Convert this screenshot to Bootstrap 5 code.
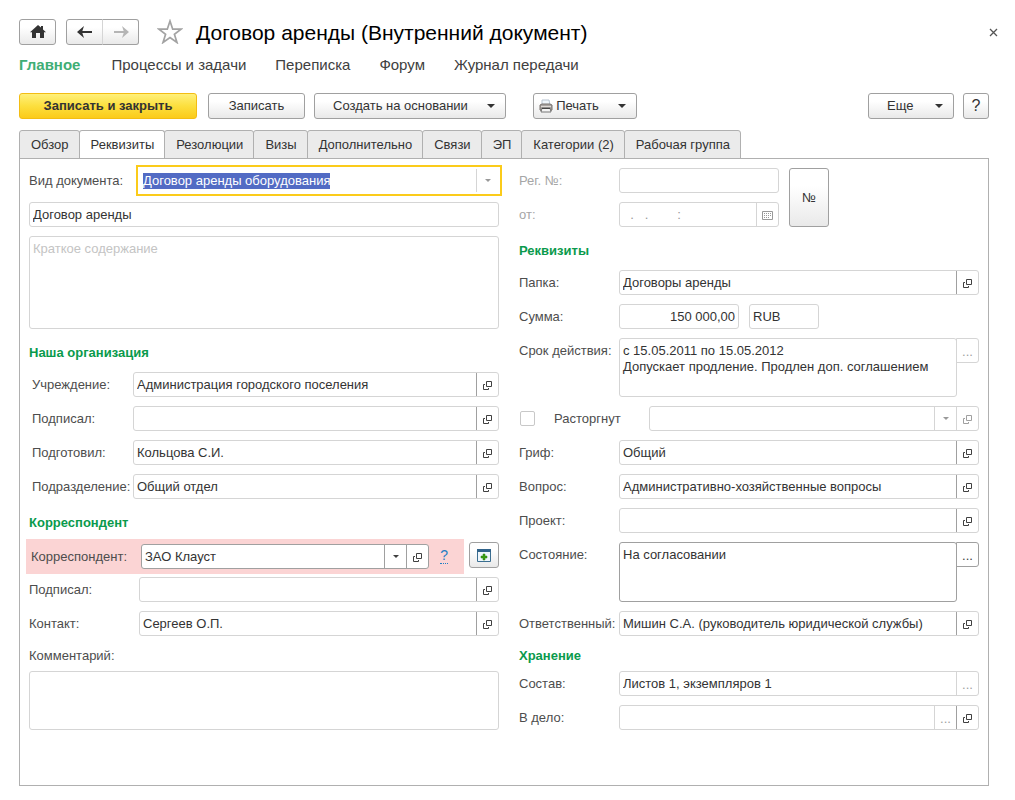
<!DOCTYPE html>
<html lang="ru">
<head>
<meta charset="utf-8">
<meta name="viewport" content="width=device-width, initial-scale=1">
<title>Договор аренды (Внутренний документ)</title>
<link href="https://cdn.jsdelivr.net/npm/bootstrap@5.3.0/dist/css/bootstrap.min.css" rel="stylesheet">
<style>
  :root { --line: #d5d5d5; --edge: #a0a0a0; --ink: #333; }
  body { font-family: "Liberation Sans", Arial, sans-serif; font-size: 13px; line-height: 16px; color: var(--ink); background: #fff; }
  .page { padding: 19px 26px 14px 19px; }
  svg { display: block; flex: none; }

  /* window header */
  .topbar { height: 26px; margin-right: -10px; }
  .history { margin: 0 18px 0 10px; }
  .doc-title { font-size: 21px; line-height: 26px; color: #000; margin: 1px 0 0 13px; }
  .close-btn { border: 0; background: none; padding: 0 1px; }
  .sections { height: 40px; padding-top: 8px; font-size: 15px; line-height: 24px; gap: 29px; }
  .sections a { color: #404040; text-decoration: none; }
  .sections a.current { color: #3fae75; font-weight: bold; margin-right: 2px; }

  /* push buttons */
  .btn-form { --bs-btn-padding-x: 0; --bs-btn-padding-y: 0; --bs-btn-font-size: 13px; --bs-btn-line-height: 16px;
    --bs-btn-border-radius: 3px; --bs-btn-color: #333; --bs-btn-border-color: #a0a0a0; --bs-btn-hover-border-color: #888;
    display: inline-flex; align-items: center; justify-content: center; height: 26px;
    background: linear-gradient(#fff 30%, #e9e9e9); }
  .btn-main { --bs-btn-border-color: #f3bd13; font-weight: bold; background: linear-gradient(#fff07a, #fcdf3e 50%, #fbcb1a); margin-right: 2px; }
  .btn-drop { justify-content: space-between; padding: 0 10px 0 18px; }
  .btn-fwd { border-left-color: #d5d5d5; }
  .w-main { width: 178px; } .w-save { width: 97px; } .w-create { width: 192px; }
  .w-print { width: 104px; padding-left: 5px; margin-left: 18px; }
  .w-more { width: 86px; } .w-sq { width: 26px; } .w-home { width: 37px; } .w-add { width: 30px; margin-top: 3px; }
  .toolbar { gap: 9px; padding-top: 8px; }
  .caret { width: 0; height: 0; border: 4px solid transparent; border-top: 4px solid #333; border-bottom: 0; }
  .caret-sm { width: 0; height: 0; border: 3px solid transparent; border-top: 3px solid #404040; border-bottom: 0; }

  /* tabs */
  .form-tabs { margin: 11px 0 -1px; border: 0; --bs-nav-tabs-border-radius: 3px; }
  .form-tabs .nav-link { height: 29px; padding: 0 10px 0 11px; margin: 0 -1px 0 0; color: #333; background: #ebebeb;
    border: 1px solid #b0b0b0; line-height: 27px; font-size: 13px; }
  .form-tabs .nav-link.active { background: #fff; color: #333; border-color: #b0b0b0 #b0b0b0 #fff; }
  .sheet { border: 1px solid #b0b0b0; padding: 9px; gap: 20px; }
  .col-left { flex: 470 1 0; min-width: 0; }
  .col-right { flex: 460 1 0; min-width: 0; }
  .stack { display: flex; flex-direction: column; gap: 9px; }

  /* form lines */
  .line { display: flex; min-height: 25px; }
  .numbering { display: flex; gap: 10px; }
  .cap { flex: none; width: 100px; line-height: 25px; color: #4d4d4d; white-space: nowrap; }
  .cap-org { width: 104px; padding-left: 3px; }
  .cap-kind, .cap-corr { width: 110px; }
  .cap-off { color: #a6a6a6; }
  .group-head { font-size: 13px; font-weight: bold; color: #0a9a4c; line-height: 29px; height: 25px; margin: 0; }
  .short { height: 17px; line-height: 21px; width: auto; }
  .box { display: flex; flex: 1 1 0; min-width: 0; height: 25px; border: 1px solid var(--line); border-radius: 3px; background: #fff; }
  .box input { flex: 1 1 0; width: 0; min-width: 0; border: 0; padding: 0 3px; background: none; color: var(--ink); outline: 0; }
  .box input.faint { color: #999; }
  .box button, .side { flex: none; width: 22px; padding: 0; border: 0; border-left: 1px solid var(--edge); background: none;
    display: flex; align-items: center; justify-content: center; color: #404040; }
  .box button svg { margin-top: 1px; }
  .box button.off, .side.off { border-left-color: var(--line); color: #a0a0a0; }
  .off .caret-sm { border-top-color: #999; }
  .strong { border-color: var(--edge); }
  .focused { border-color: transparent; outline: 2px solid #fbcb1a; outline-offset: 1px; border-radius: 0; }
  ::selection { background: #526bc4; color: #fff; }
  .memo { display: block; flex: 1 1 0; min-width: 0; border: 1px solid var(--line); border-radius: 3px; padding: 4px 3px;
    resize: none; color: var(--ink); line-height: 16px; outline: 0; overflow: hidden; background: none; }
  .memo::placeholder { color: #c4c4c4; opacity: 1; }
  .memo.strong { border-color: var(--edge); }
  .h-tall { height: 93px; flex: none; } .h-two { height: 59px; flex: none; } .h-state { height: 60px; }
  .line .h-two { flex: 1 1 0; }
  .side { width: 23px; height: 25px; margin-left: -1px; border: 1px solid var(--line); border-radius: 0 3px 3px 0; }
  .side.strong { border-color: var(--edge); }
  .dots { line-height: 16px; padding-top: 3px; }
  .w-sum { flex: none; width: 120px; } .w-cur { flex: none; width: 70px; margin-left: 10px; } .w-reg { flex: none; width: 160px; }
  .w-num { width: 40px; height: 59px; }
  .tick { appearance: none; width: 15px; height: 15px; border: 1px solid #c8c8c8; border-radius: 2px; margin: 5px 19px 0 1px; flex: none; background: #fff; }
  .tick-label { width: 95px; }
  .missing { margin: -3px 0 -6px -3px; gap: 5px; }
  .missing-bg { display: flex; flex: 1 1 0; min-width: 0; background: #fbd4d4; padding: 5px 16px 5px 5px; }
  .hint { font-size: 14px; line-height: 16px; color: #1f7fc4; text-decoration: none; border-bottom: 1px dotted #1f7fc4; margin: 3px 0 0 11px; height: 17px; }
</style>
</head>
<body>
<svg width="0" height="0" class="position-absolute" aria-hidden="true">
  <symbol id="open" viewBox="0 0 9 9"><path d="M3.500.5h5v5h-5zM2 3.500H.5v5h5V7" fill="none" stroke="currentColor"/></symbol>
</svg>

<div class="page d-flex flex-column min-vh-100">
  <header>
    <div class="topbar d-flex align-items-start">
      <button class="btn btn-form w-home" aria-label="Домой">
        <svg width="16" height="14" viewBox="0 0 16 14"><path d="M8 0 0 7.200h2V13h4V8h4v5h4V7.200h2L13 4.400V1h-2v1.600z" fill="#333"/></svg>
      </button>
      <div class="btn-group history">
        <button class="btn btn-form w-home" aria-label="Назад">
          <svg width="16" height="12" viewBox="0 0 16 12"><path d="M2 6h13" stroke="#333" stroke-width="2"/><path d="M7 0 0 6l7 6L5 6z" fill="#333"/></svg>
        </button>
        <button class="btn btn-form btn-fwd w-home" aria-label="Вперёд">
          <svg width="16" height="12" viewBox="0 0 16 12"><path d="M1 6h13" stroke="#b5b5b5" stroke-width="2"/><path d="M9 0l7 6-7 6 2-6z" fill="#b5b5b5"/></svg>
        </button>
      </div>
      <svg width="26" height="25" viewBox="0 0 26 25"><path d="M13 2l2.700 8.200h8.300l-6.600 5.100 2.600 8.200-7-5-7 5 2.600-8.200L2 10.200h8.300z" fill="#fff" stroke="#a3a3a3" stroke-width="1.700"/></svg>
      <h1 class="doc-title">Договор аренды (Внутренний документ)</h1>
      <button class="close-btn ms-auto align-self-center" aria-label="Закрыть">
        <svg width="9" height="9" viewBox="0 0 9 9"><path d="M1 1l7 7M8 1 1 8" stroke="#555" stroke-width="1.300"/></svg>
      </button>
    </div>
    <nav class="sections d-flex">
      <a class="current" href="#">Главное</a>
      <a href="#">Процессы и задачи</a>
      <a href="#">Переписка</a>
      <a href="#">Форум</a>
      <a href="#">Журнал передачи</a>
    </nav>
    <div class="toolbar d-flex">
      <button class="btn btn-form btn-main w-main">Записать и закрыть</button>
      <button class="btn btn-form w-save">Записать</button>
      <button class="btn btn-form btn-drop w-create">Создать на основании<span class="caret"></span></button>
      <button class="btn btn-form btn-drop w-print">
        <svg width="14" height="14" viewBox="0 0 14 14"><path d="M3 1h7l1 5H3z" fill="#eef5fb" stroke="#b7c3d0"/><path d="M1 6l2-1h8l2 1v5l-2 1H3l-2-1z" fill="#a8a4a2" stroke="#77706c"/><path d="M2 7.500h10" stroke="#ded9d5"/><path d="M3 9h8l1 4H2z" fill="#f4f4f4" stroke="#777"/><path d="M3 9.500h8" stroke="#444"/></svg>
        <span class="me-3">Печать</span><span class="caret"></span>
      </button>
      <button class="btn btn-form btn-drop w-more ms-auto">Еще<span class="caret"></span></button>
      <button class="btn btn-form w-sq fs-6">?</button>
    </div>
  </header>

  <ul class="nav nav-tabs form-tabs" role="tablist">
    <li class="nav-item"><button class="nav-link" role="tab">Обзор</button></li>
    <li class="nav-item"><button class="nav-link active" role="tab">Реквизиты</button></li>
    <li class="nav-item"><button class="nav-link" role="tab">Резолюции</button></li>
    <li class="nav-item"><button class="nav-link" role="tab">Визы</button></li>
    <li class="nav-item"><button class="nav-link" role="tab">Дополнительно</button></li>
    <li class="nav-item"><button class="nav-link" role="tab">Связи</button></li>
    <li class="nav-item"><button class="nav-link" role="tab">ЭП</button></li>
    <li class="nav-item"><button class="nav-link" role="tab">Категории (2)</button></li>
    <li class="nav-item"><button class="nav-link" role="tab">Рабочая группа</button></li>
  </ul>

  <main class="sheet d-flex flex-grow-1">
    <section class="col-left stack">
      <div class="line"><label class="cap cap-kind" for="kind">Вид документа:</label>
        <div class="box focused"><input id="kind" value="Договор аренды оборудования"><button class="off" aria-label="Выбрать"><span class="caret-sm"></span></button></div></div>
      <div class="line"><div class="box"><input aria-label="Наименование" value="Договор аренды"></div></div>
      <textarea class="memo h-tall" placeholder="Краткое содержание" aria-label="Краткое содержание"></textarea>

      <h2 class="group-head">Наша организация</h2>
      <div class="line"><label class="cap cap-org" for="org">Учреждение:</label>
        <div class="box"><input id="org" value="Администрация городского поселения"><button aria-label="Открыть"><svg width="9" height="9"><use href="#open"/></svg></button></div></div>
      <div class="line"><label class="cap cap-org" for="signed">Подписал:</label>
        <div class="box"><input id="signed"><button aria-label="Открыть"><svg width="9" height="9"><use href="#open"/></svg></button></div></div>
      <div class="line"><label class="cap cap-org" for="author">Подготовил:</label>
        <div class="box"><input id="author" value="Кольцова С.И."><button aria-label="Открыть"><svg width="9" height="9"><use href="#open"/></svg></button></div></div>
      <div class="line"><label class="cap cap-org" for="dept">Подразделение:</label>
        <div class="box"><input id="dept" value="Общий отдел"><button aria-label="Открыть"><svg width="9" height="9"><use href="#open"/></svg></button></div></div>

      <h2 class="group-head">Корреспондент</h2>
      <div class="line missing">
        <div class="missing-bg"><label class="cap cap-corr" for="corr">Корреспондент:</label>
          <div class="box strong"><input id="corr" value="ЗАО Клауст"><button aria-label="Выбрать"><span class="caret-sm"></span></button><button aria-label="Открыть"><svg width="9" height="9"><use href="#open"/></svg></button></div>
          <a class="hint" href="#">?</a></div>
        <button class="btn btn-form w-add" aria-label="Добавить">
          <svg width="14" height="13" viewBox="0 0 14 13"><path d="M.5.5h13v12H.5z" fill="#eef6fc" stroke="#3b6e91"/><path d="M0 0h14v3H0z" fill="#31638a"/><path d="M6 5h2v2h2v2H8v2H6V9H4V7h2z" fill="#3a9b12" stroke="#2f8a10" stroke-width=".5"/></svg>
        </button>
      </div>
      <div class="line"><label class="cap cap-corr" for="csigned">Подписал:</label>
        <div class="box"><input id="csigned"><button aria-label="Открыть"><svg width="9" height="9"><use href="#open"/></svg></button></div></div>
      <div class="line"><label class="cap cap-corr" for="contact">Контакт:</label>
        <div class="box"><input id="contact" value="Сергеев О.П."><button aria-label="Открыть"><svg width="9" height="9"><use href="#open"/></svg></button></div></div>
      <label class="cap short" for="comment">Комментарий:</label>
      <textarea class="memo h-two" id="comment"></textarea>
    </section>

    <section class="col-right stack">
      <div class="numbering">
        <div class="stack">
          <div class="line"><label class="cap cap-off" for="reg">Рег. №:</label><div class="box w-reg"><input id="reg"></div></div>
          <div class="line"><label class="cap cap-off" for="regdate">от:</label><div class="box w-reg"><input id="regdate" class="faint" value="  .   .        :"><button class="off" aria-label="Календарь"><svg width="11" height="9" viewBox="0 0 11 9"><path d="M.5.5h10v8H.5z" fill="none" stroke="#999"/><path d="M2 2.500h7M2 4.500h7M2 6.500h5" stroke="#999" stroke-dasharray="1 1"/></svg></button></div></div>
        </div>
        <button class="btn btn-form w-num">№</button>
      </div>

      <h2 class="group-head">Реквизиты</h2>
      <div class="line"><label class="cap" for="folder">Папка:</label>
        <div class="box"><input id="folder" value="Договоры аренды"><button aria-label="Открыть"><svg width="9" height="9"><use href="#open"/></svg></button></div></div>
      <div class="line"><label class="cap" for="sum">Сумма:</label>
        <div class="box w-sum"><input id="sum" class="text-end" value="150 000,00"></div>
        <div class="box w-cur"><input aria-label="Валюта" value="RUB"></div></div>
      <div class="line"><label class="cap" for="term">Срок действия:</label>
        <textarea class="memo h-two" id="term">с 15.05.2011 по 15.05.2012
Допускает продление. Продлен доп. соглашением</textarea><button class="side off" aria-label="Выбрать"><span class="dots">...</span></button></div>
      <div class="line"><input class="tick" type="checkbox" id="ended"><label class="cap tick-label" for="ended">Расторгнут</label>
        <div class="box"><input aria-label="Основание"><button class="off" aria-label="Выбрать"><span class="caret-sm"></span></button><button class="off" aria-label="Открыть"><svg width="9" height="9"><use href="#open"/></svg></button></div></div>
      <div class="line"><label class="cap" for="access">Гриф:</label>
        <div class="box"><input id="access" value="Общий"><button aria-label="Открыть"><svg width="9" height="9"><use href="#open"/></svg></button></div></div>
      <div class="line"><label class="cap" for="topic">Вопрос:</label>
        <div class="box"><input id="topic" value="Административно-хозяйственные вопросы"><button aria-label="Открыть"><svg width="9" height="9"><use href="#open"/></svg></button></div></div>
      <div class="line"><label class="cap" for="project">Проект:</label>
        <div class="box"><input id="project"><button aria-label="Открыть"><svg width="9" height="9"><use href="#open"/></svg></button></div></div>
      <div class="line"><label class="cap" for="state">Состояние:</label>
        <textarea class="memo strong h-state" id="state">На согласовании</textarea><button class="side strong" aria-label="Выбрать"><span class="dots">...</span></button></div>
      <div class="line"><label class="cap" for="owner">Ответственный:</label>
        <div class="box"><input id="owner" value="Мишин С.А. (руководитель юридической службы)"><button aria-label="Открыть"><svg width="9" height="9"><use href="#open"/></svg></button></div></div>
      <h2 class="group-head short">Хранение</h2>
      <div class="line"><label class="cap" for="parts">Состав:</label>
        <div class="box"><input id="parts" value="Листов 1, экземпляров 1"><button class="off" aria-label="Выбрать"><span class="dots">...</span></button></div></div>
      <div class="line"><label class="cap" for="file">В дело:</label>
        <div class="box"><input id="file"><button class="off" aria-label="Выбрать"><span class="dots">...</span></button><button aria-label="Открыть"><svg width="9" height="9"><use href="#open"/></svg></button></div></div>
    </section>
  </main>
</div>
<script src="https://cdn.jsdelivr.net/npm/bootstrap@5.3.0/dist/js/bootstrap.bundle.min.js"></script>
<script>
  const kind = document.getElementById('kind');
  kind.focus();
  kind.select();
</script>
</body>
</html>
